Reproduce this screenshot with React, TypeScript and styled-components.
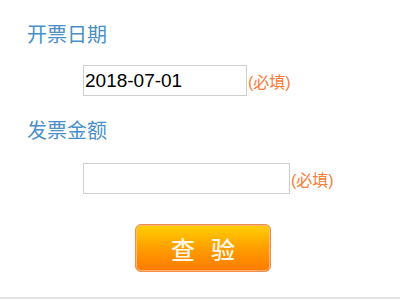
import React from 'react'
import styled, { createGlobalStyle } from 'styled-components'

const Global = createGlobalStyle`
  body {
    margin: 0;
    background: #fff;
    font-family: "Noto Sans CJK SC", "Noto Sans", sans-serif;
  }
`

const Page = styled.div`
  width: 400px;
  height: 300px;
  display: flex;
  flex-direction: column;
  overflow: hidden;
`

const Form = styled.div`
  display: flex;
  flex-direction: column;
  padding: 20px 0 0 27px;
  height: 277px;
`

const Label = styled.div<{ $top?: number }>`
  margin-top: ${(p) => p.$top ?? 0}px;
  font-size: 20px;
  line-height: 28px;
  color: #4b8fc8;
`

const Row = styled.div<{ $top: number }>`
  display: flex;
  align-items: center;
  margin-top: ${(p) => p.$top}px;
  padding-left: 56px;
`

const Field = styled.input<{ $w: number }>`
  box-sizing: border-box;
  width: ${(p) => p.$w}px;
  height: 31px;
  border: 1px solid #cfcfcf;
  padding: 0 0 0 1px;
  margin: 0;
  font-family: "Liberation Sans", Arial, sans-serif;
  font-size: 19px;
  color: #000;
  outline: none;
`

const Required = styled.span`
  margin-left: 1px;
  font-family: "Liberation Sans", "Noto Sans CJK SC", sans-serif;
  font-size: 16px;
  color: #fa7c36;
`

const ButtonRow = styled.div`
  display: flex;
  padding-left: 108px;
  margin-top: 30px;
`

const Submit = styled.button`
  box-sizing: border-box;
  width: 136px;
  height: 48px;
  border: 1px solid #f7894a;
  border-radius: 6px;
  box-shadow: inset 0 0 0 1px #ffb77a;
  background: linear-gradient(#ffd000, #ff9a00 55%, #ff7a00);
  color: #fff8ea;
  font-family: "Noto Sans CJK SC", sans-serif;
  font-size: 24px;
  font-weight: 500;
  letter-spacing: 16px;
  text-indent: 16px;
  padding: 0;
  cursor: pointer;
`

const Rule = styled.div`
  height: 2px;
  background: #e2e2e2;
`

export default function App() {
  return (
    <Page>
      <Global />
      <Form>
        <Label>开票日期</Label>
        <Row $top={17}>
          <Field $w={164} defaultValue="2018-07-01" />
          <Required>(必填)</Required>
        </Row>
        <Label $top={20}>发票金额</Label>
        <Row $top={19}>
          <Field $w={207} />
          <Required>(必填)</Required>
        </Row>
        <ButtonRow>
          <Submit>查验</Submit>
        </ButtonRow>
      </Form>
      <Rule />
    </Page>
  )
}
